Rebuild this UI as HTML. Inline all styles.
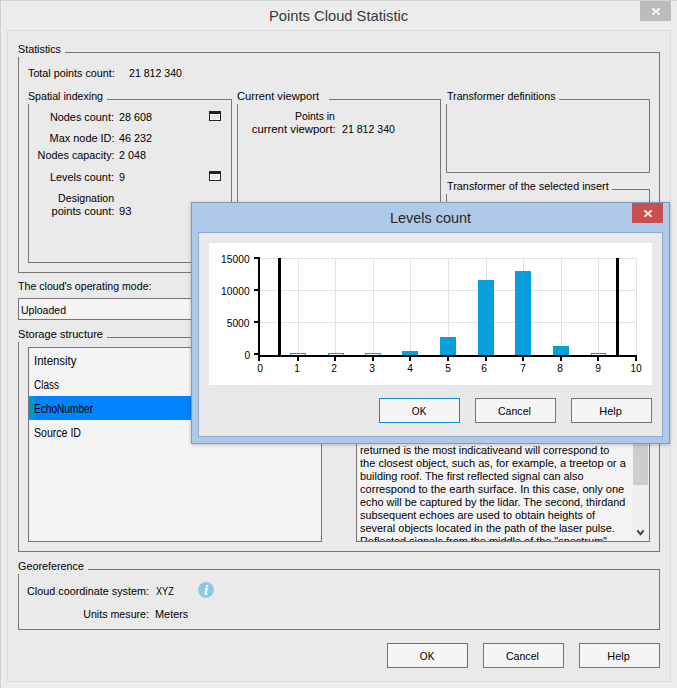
<!DOCTYPE html>
<html><head><meta charset="utf-8"><title>Points Cloud Statistic</title>
<style>
html,body{margin:0;padding:0;background:#ececec;}
body{width:677px;height:688px;position:relative;overflow:hidden;font-family:"Liberation Sans", sans-serif;}
.b{position:absolute;}
.t{position:absolute;white-space:pre;display:block;}
#clip{position:absolute;left:357px;top:431px;width:275px;height:110px;overflow:hidden}
</style></head><body>
<div class="b" style="left:0px;top:0px;width:677px;height:688px;background:#ececec"></div>
<div class="b" style="left:1px;top:1px;width:676px;height:1px;background:#f0f0f0"></div>
<div class="b" style="left:1px;top:1px;width:1px;height:687px;background:#f0f0f0"></div>
<div class="b" style="left:0px;top:0px;width:677px;height:1px;background:#d2d2d2"></div>
<div class="b" style="left:0px;top:0px;width:1px;height:688px;background:#d0d0d0"></div>
<div class="b" style="left:7px;top:30px;width:664px;height:652px;background:#eaeaea;border:1px solid #dcdcdc;box-sizing:border-box"></div>
<div class="b" style="left:640px;top:1px;width:31px;height:20px;background:#bcbcbc"></div>
<svg class="b" style="left:648px;top:3px" width="16" height="16" viewBox="0 0 16 16"><path d="M4.40 5.30 L11.60 11.70 M11.60 5.30 L4.40 11.70" stroke="#fff" stroke-width="1.7" fill="none"/></svg>
<div class="b" style="left:65px;top:52px;width:595px;height:1px;background:#767676"></div>
<div class="b" style="left:18px;top:57px;width:1px;height:216px;background:#767676"></div>
<div class="b" style="left:659px;top:52px;width:1px;height:221px;background:#767676"></div>
<div class="b" style="left:18px;top:272px;width:642px;height:1px;background:#767676"></div>
<div class="b" style="left:107px;top:99px;width:125px;height:1px;background:#767676"></div>
<div class="b" style="left:28px;top:104px;width:1px;height:159px;background:#767676"></div>
<div class="b" style="left:231px;top:99px;width:1px;height:164px;background:#767676"></div>
<div class="b" style="left:28px;top:262px;width:204px;height:1px;background:#767676"></div>
<div class="b" style="left:329px;top:99px;width:112px;height:1px;background:#767676"></div>
<div class="b" style="left:237px;top:104px;width:1px;height:159px;background:#767676"></div>
<div class="b" style="left:440px;top:99px;width:1px;height:164px;background:#767676"></div>
<div class="b" style="left:237px;top:262px;width:204px;height:1px;background:#767676"></div>
<div class="b" style="left:559px;top:99px;width:91px;height:1px;background:#767676"></div>
<div class="b" style="left:446px;top:104px;width:1px;height:69px;background:#767676"></div>
<div class="b" style="left:649px;top:99px;width:1px;height:74px;background:#767676"></div>
<div class="b" style="left:446px;top:172px;width:204px;height:1px;background:#767676"></div>
<div class="b" style="left:612px;top:189px;width:38px;height:1px;background:#767676"></div>
<div class="b" style="left:446px;top:194px;width:1px;height:69px;background:#767676"></div>
<div class="b" style="left:649px;top:189px;width:1px;height:74px;background:#767676"></div>
<div class="b" style="left:446px;top:262px;width:204px;height:1px;background:#767676"></div>
<div class="b" style="left:209px;top:111px;width:12px;height:10px;box-sizing:border-box;border:1px solid #222;border-top:3px solid #222;background:#e8e8e8;box-shadow:inset 0 0 0 1px #fff"></div>
<div class="b" style="left:209px;top:171px;width:12px;height:10px;box-sizing:border-box;border:1px solid #222;border-top:3px solid #222;background:#e8e8e8;box-shadow:inset 0 0 0 1px #fff"></div>
<div class="b" style="left:18px;top:298px;width:313px;height:22px;border:1px solid #767676;background:#f4f4f4;box-sizing:border-box"></div>
<div class="b" style="left:107px;top:337px;width:553px;height:1px;background:#767676"></div>
<div class="b" style="left:18px;top:342px;width:1px;height:210px;background:#767676"></div>
<div class="b" style="left:659px;top:337px;width:1px;height:215px;background:#767676"></div>
<div class="b" style="left:18px;top:551px;width:642px;height:1px;background:#767676"></div>
<div class="b" style="left:28px;top:347px;width:294px;height:195px;border:1px solid #767676;background:#f4f4f4;box-sizing:border-box"></div>
<div class="b" style="left:29px;top:396px;width:292px;height:24px;background:#0084ff"></div>
<div class="b" style="left:29px;top:396px;width:5px;height:24px;background:#0099cc"></div>
<div class="b" style="left:356px;top:430px;width:294px;height:112px;border:1px solid #767676;background:#f4f4f4;box-sizing:border-box"></div>
<div class="b" style="left:633px;top:431px;width:16px;height:110px;background:#f0f0f0"></div>
<div class="b" style="left:633px;top:431px;width:15px;height:54px;background:#cdcdcd"></div>
<svg class="b" style="left:635px;top:527px" width="12" height="12" viewBox="0 0 12 12"><path d="M2.4 3.4 L5.5 7.3 L8.6 3.4" stroke="#3c3c3c" stroke-width="1.9" fill="none"/></svg>
<div class="b" style="left:88px;top:569px;width:572px;height:1px;background:#767676"></div>
<div class="b" style="left:18px;top:574px;width:1px;height:56px;background:#767676"></div>
<div class="b" style="left:659px;top:569px;width:1px;height:61px;background:#767676"></div>
<div class="b" style="left:18px;top:629px;width:642px;height:1px;background:#767676"></div>
<svg class="b" style="left:197px;top:581px" width="18" height="18" viewBox="0 0 18 18"><circle cx="9" cy="8.9" r="7.9" fill="#8ccae4"/><text x="9.1" y="13.8" font-family="Liberation Serif, serif" font-style="italic" font-weight="bold" font-size="15" fill="#fff" text-anchor="middle">i</text></svg>
<div class="b" style="left:387px;top:643px;width:81px;height:25px;border:1px solid #0f8ec4;background:#f5f5f5;box-sizing:border-box"></div>
<div class="b" style="left:483px;top:643px;width:81px;height:25px;border:1px solid #757575;background:#f5f5f5;box-sizing:border-box"></div>
<div class="b" style="left:579px;top:643px;width:81px;height:25px;border:1px solid #757575;background:#f5f5f5;box-sizing:border-box"></div>
<span class="t " style="left:268.80px;top:6.80px;font-size:15px;line-height:17px;color:#383838;transform:scaleX(0.9821);transform-origin:0 0">Points Cloud Statistic</span>
<span class="t " style="left:18.30px;top:42.52px;font-size:11.2px;line-height:13.2px;color:#000;transform:scaleX(0.9606);transform-origin:0 0">Statistics</span>
<span class="t " style="left:28.20px;top:66.52px;font-size:11.2px;line-height:13.2px;color:#000;transform:scaleX(0.9624);transform-origin:0 0">Total points count:</span>
<span class="t " style="left:128.60px;top:66.52px;font-size:11.2px;line-height:13.2px;color:#000;transform:scaleX(0.9464);transform-origin:0 0">21 812 340</span>
<span class="t " style="left:28.40px;top:89.52px;font-size:11.2px;line-height:13.2px;color:#000;transform:scaleX(0.9494);transform-origin:0 0">Spatial indexing</span>
<span class="t " style="left:48.46px;top:110.52px;font-size:11.2px;line-height:13.2px;color:#000;transform:scaleX(0.9706);transform-origin:100% 0">Nodes count:</span>
<span class="t " style="left:119.00px;top:110.52px;font-size:11.2px;line-height:13.2px;color:#000;transform:scaleX(0.9644);transform-origin:0 0">28 608</span>
<span class="t " style="left:47.85px;top:131.52px;font-size:11.2px;line-height:13.2px;color:#000;transform:scaleX(0.9768);transform-origin:100% 0">Max node ID:</span>
<span class="t " style="left:119.00px;top:131.52px;font-size:11.2px;line-height:13.2px;color:#000;transform:scaleX(0.9644);transform-origin:0 0">46 232</span>
<span class="t " style="left:34.79px;top:148.52px;font-size:11.2px;line-height:13.2px;color:#000;transform:scaleX(0.9672);transform-origin:100% 0">Nodes capacity:</span>
<span class="t " style="left:119.00px;top:148.52px;font-size:11.2px;line-height:13.2px;color:#000;transform:scaleX(0.9643);transform-origin:0 0">2 048</span>
<span class="t " style="left:48.46px;top:170.52px;font-size:11.2px;line-height:13.2px;color:#000;transform:scaleX(0.9706);transform-origin:100% 0">Levels count:</span>
<span class="t " style="left:119.00px;top:170.52px;font-size:11.2px;line-height:13.2px;color:#000;transform:scaleX(0.9624);transform-origin:0 0">9</span>
<span class="t " style="left:55.31px;top:191.52px;font-size:11.2px;line-height:13.2px;color:#000;transform:scaleX(0.9476);transform-origin:100% 0">Designation</span>
<span class="t " style="left:50.95px;top:204.52px;font-size:11.2px;line-height:13.2px;color:#000;transform:scaleX(0.9929);transform-origin:100% 0">points count:</span>
<span class="t " style="left:119.00px;top:204.52px;font-size:11.2px;line-height:13.2px;color:#000;transform:scaleX(1.0038);transform-origin:0 0">93</span>
<span class="t " style="left:237.20px;top:89.52px;font-size:11.2px;line-height:13.2px;color:#000;transform:scaleX(0.9990);transform-origin:0 0">Current viewport</span>
<span class="t " style="left:292.48px;top:109.52px;font-size:11.2px;line-height:13.2px;color:#000;transform:scaleX(0.9319);transform-origin:100% 0">Points in</span>
<span class="t " style="left:252.70px;top:122.52px;font-size:11.2px;line-height:13.2px;color:#000;transform:scaleX(1.0157);transform-origin:100% 0">current viewport:</span>
<span class="t " style="left:342.00px;top:122.52px;font-size:11.2px;line-height:13.2px;color:#000;transform:scaleX(0.9464);transform-origin:0 0">21 812 340</span>
<span class="t " style="left:446.60px;top:89.52px;font-size:11.2px;line-height:13.2px;color:#000;transform:scaleX(0.9518);transform-origin:0 0">Transformer definitions</span>
<span class="t " style="left:446.60px;top:179.52px;font-size:11.2px;line-height:13.2px;color:#000;transform:scaleX(0.9691);transform-origin:0 0">Transformer of the selected insert</span>
<span class="t " style="left:18.30px;top:279.52px;font-size:11.2px;line-height:13.2px;color:#000;transform:scaleX(0.9480);transform-origin:0 0">The cloud&#x27;s operating mode:</span>
<span class="t " style="left:21.30px;top:303.55px;font-size:11.4px;line-height:13.4px;color:#000;transform:scaleX(0.9225);transform-origin:0 0">Uploaded</span>
<span class="t " style="left:18.30px;top:327.52px;font-size:11.2px;line-height:13.2px;color:#000;transform:scaleX(0.9904);transform-origin:0 0">Storage structure</span>
<span class="t " style="left:34.30px;top:354.24px;font-size:12px;line-height:14px;color:#000;transform:scaleX(0.9507);transform-origin:0 0">Intensity</span>
<span class="t " style="left:34.30px;top:378.24px;font-size:12px;line-height:14px;color:#000;transform:scaleX(0.8329);transform-origin:0 0">Class</span>
<span class="t " style="left:34.30px;top:402.24px;font-size:12px;line-height:14px;color:#000;transform:scaleX(0.8425);transform-origin:0 0">EchoNumber</span>
<span class="t " style="left:34.30px;top:426.24px;font-size:12px;line-height:14px;color:#000;transform:scaleX(0.8808);transform-origin:0 0">Source ID</span>
<span class="t " style="left:18.30px;top:559.52px;font-size:11.2px;line-height:13.2px;color:#000;transform:scaleX(0.9646);transform-origin:0 0">Georeference</span>
<span class="t " style="left:27.30px;top:584.52px;font-size:11.2px;line-height:13.2px;color:#000;transform:scaleX(0.9665);transform-origin:0 0">Cloud coordinate system:</span>
<span class="t " style="left:156.00px;top:584.52px;font-size:11.2px;line-height:13.2px;color:#000;transform:scaleX(0.8178);transform-origin:0 0">XYZ</span>
<span class="t " style="left:80.28px;top:607.52px;font-size:11.2px;line-height:13.2px;color:#000;transform:scaleX(0.9534);transform-origin:100% 0">Units mesure:</span>
<span class="t " style="left:155.30px;top:607.52px;font-size:11.2px;line-height:13.2px;color:#000;transform:scaleX(0.9736);transform-origin:0 0">Meters</span>
<span class="t " style="left:418.91px;top:649.52px;font-size:11.2px;line-height:13.2px;color:#000;transform:scaleX(0.9028);transform-origin:50% 0">OK</span>
<span class="t " style="left:505.29px;top:649.52px;font-size:11.2px;line-height:13.2px;color:#000;transform:scaleX(0.9475);transform-origin:50% 0">Cancel</span>
<span class="t " style="left:607.49px;top:649.52px;font-size:11.2px;line-height:13.2px;color:#000;transform:scaleX(0.9819);transform-origin:50% 0">Help</span>
<div id="clip"><span class="t d" style="left:3.40px;top:12.87px;font-size:11.5px;line-height:13.5px;color:#000;transform:scaleX(0.9424);transform-origin:0 0">returned is the most indicativeand will correspond to</span>
<span class="t d" style="left:3.40px;top:25.87px;font-size:11.5px;line-height:13.5px;color:#000;transform:scaleX(0.9625);transform-origin:0 0">the closest object, such as, for example, a treetop or a</span>
<span class="t d" style="left:3.40px;top:38.87px;font-size:11.5px;line-height:13.5px;color:#000;transform:scaleX(0.9432);transform-origin:0 0">building roof. The first reflected signal can also</span>
<span class="t d" style="left:3.40px;top:51.87px;font-size:11.5px;line-height:13.5px;color:#000;transform:scaleX(0.9637);transform-origin:0 0">correspond to the earth surface. In this case, only one</span>
<span class="t d" style="left:3.40px;top:64.87px;font-size:11.5px;line-height:13.5px;color:#000;transform:scaleX(0.9439);transform-origin:0 0">echo will be captured by the lidar. The second, thirdand</span>
<span class="t d" style="left:3.40px;top:77.87px;font-size:11.5px;line-height:13.5px;color:#000;transform:scaleX(0.9473);transform-origin:0 0">subsequent echoes are used to obtain heights of</span>
<span class="t d" style="left:3.40px;top:90.87px;font-size:11.5px;line-height:13.5px;color:#000;transform:scaleX(0.9516);transform-origin:0 0">several objects located in the path of the laser pulse.</span>
<span class="t d" style="left:3.40px;top:103.87px;font-size:11.5px;line-height:13.5px;color:#000;transform:scaleX(0.9472);transform-origin:0 0">Reflected signals from the middle of the &quot;spectrum&quot;</span></div>
<div class="b" style="left:191px;top:202px;width:479px;height:242px;background:#aecae8;border:1px solid #7f9abd;box-sizing:border-box;box-shadow:0 1px 4px rgba(0,0,0,0.22)"></div>
<div class="b" style="left:198px;top:232px;width:465px;height:205px;background:#e9e9e9;border:1px solid #8ea9cc;box-sizing:border-box"></div>
<div class="b" style="left:632px;top:203px;width:31px;height:20px;background:#c75050"></div>
<svg class="b" style="left:640px;top:205px" width="16" height="16" viewBox="0 0 16 16"><path d="M4.40 5.30 L11.60 11.70 M11.60 5.30 L4.40 11.70" stroke="#fff" stroke-width="1.7" fill="none"/></svg>
<div class="b" style="left:209px;top:243px;width:443px;height:142px;background:#fff"></div>
<div class="b" style="left:298px;top:258px;width:1px;height:97px;background:#e2e2e2"></div>
<div class="b" style="left:335px;top:258px;width:1px;height:97px;background:#e2e2e2"></div>
<div class="b" style="left:373px;top:258px;width:1px;height:97px;background:#e2e2e2"></div>
<div class="b" style="left:410px;top:258px;width:1px;height:97px;background:#e2e2e2"></div>
<div class="b" style="left:448px;top:258px;width:1px;height:97px;background:#e2e2e2"></div>
<div class="b" style="left:486px;top:258px;width:1px;height:97px;background:#e2e2e2"></div>
<div class="b" style="left:523px;top:258px;width:1px;height:97px;background:#e2e2e2"></div>
<div class="b" style="left:561px;top:258px;width:1px;height:97px;background:#e2e2e2"></div>
<div class="b" style="left:598px;top:258px;width:1px;height:97px;background:#e2e2e2"></div>
<div class="b" style="left:636px;top:258px;width:1px;height:97px;background:#e2e2e2"></div>
<div class="b" style="left:260px;top:258px;width:377px;height:1px;background:#e2e2e2"></div>
<div class="b" style="left:260px;top:290px;width:377px;height:1px;background:#e2e2e2"></div>
<div class="b" style="left:260px;top:322px;width:377px;height:1px;background:#e2e2e2"></div>
<div class="b" style="left:290px;top:353px;width:16px;height:2px;background:#eef8fd;border:1px solid #089fda;border-bottom:0;box-sizing:border-box"></div>
<div class="b" style="left:328px;top:353px;width:16px;height:2px;background:#eef8fd;border:1px solid #089fda;border-bottom:0;box-sizing:border-box"></div>
<div class="b" style="left:365px;top:353px;width:16px;height:2px;background:#eef8fd;border:1px solid #089fda;border-bottom:0;box-sizing:border-box"></div>
<div class="b" style="left:402px;top:351px;width:16px;height:5px;background:#089fda"></div>
<div class="b" style="left:440px;top:337px;width:16px;height:19px;background:#089fda"></div>
<div class="b" style="left:478px;top:280px;width:16px;height:76px;background:#089fda"></div>
<div class="b" style="left:515px;top:271px;width:16px;height:85px;background:#089fda"></div>
<div class="b" style="left:553px;top:346px;width:16px;height:10px;background:#089fda"></div>
<div class="b" style="left:591px;top:353px;width:15px;height:2px;background:#eef8fd;border:1px solid #089fda;border-bottom:0;box-sizing:border-box"></div>
<div class="b" style="left:258px;top:257px;width:2px;height:100px;background:#000"></div>
<div class="b" style="left:258px;top:355px;width:379px;height:2px;background:#000"></div>
<div class="b" style="left:254px;top:257px;width:6px;height:2px;background:#000"></div>
<div class="b" style="left:254px;top:289px;width:6px;height:2px;background:#000"></div>
<div class="b" style="left:254px;top:321px;width:6px;height:2px;background:#000"></div>
<div class="b" style="left:254px;top:353px;width:6px;height:2px;background:#000"></div>
<div class="b" style="left:258px;top:355px;width:2px;height:6px;background:#000"></div>
<div class="b" style="left:297px;top:355px;width:2px;height:6px;background:#000"></div>
<div class="b" style="left:334px;top:355px;width:2px;height:6px;background:#000"></div>
<div class="b" style="left:372px;top:355px;width:2px;height:6px;background:#000"></div>
<div class="b" style="left:409px;top:355px;width:2px;height:6px;background:#000"></div>
<div class="b" style="left:447px;top:355px;width:2px;height:6px;background:#000"></div>
<div class="b" style="left:485px;top:355px;width:2px;height:6px;background:#000"></div>
<div class="b" style="left:522px;top:355px;width:2px;height:6px;background:#000"></div>
<div class="b" style="left:560px;top:355px;width:2px;height:6px;background:#000"></div>
<div class="b" style="left:597px;top:355px;width:2px;height:6px;background:#000"></div>
<div class="b" style="left:635px;top:355px;width:2px;height:6px;background:#000"></div>
<div class="b" style="left:278px;top:258px;width:3px;height:99px;background:#000"></div>
<div class="b" style="left:616px;top:258px;width:3px;height:99px;background:#000"></div>
<div class="b" style="left:379px;top:398px;width:81px;height:25px;border:1px solid #0f8ec4;background:#f5f5f5;box-sizing:border-box"></div>
<div class="b" style="left:475px;top:398px;width:81px;height:25px;border:1px solid #757575;background:#f5f5f5;box-sizing:border-box"></div>
<div class="b" style="left:571px;top:398px;width:81px;height:25px;border:1px solid #757575;background:#f5f5f5;box-sizing:border-box"></div>
<span class="t " style="left:390.00px;top:209.20px;font-size:15px;line-height:17px;color:#262626;transform:scaleX(0.9616);transform-origin:0 0">Levels count</span>
<span class="t " style="left:410.91px;top:404.52px;font-size:11.2px;line-height:13.2px;color:#000;transform:scaleX(0.9028);transform-origin:50% 0">OK</span>
<span class="t " style="left:497.29px;top:404.52px;font-size:11.2px;line-height:13.2px;color:#000;transform:scaleX(0.9475);transform-origin:50% 0">Cancel</span>
<span class="t " style="left:599.49px;top:404.52px;font-size:11.2px;line-height:13.2px;color:#000;transform:scaleX(0.9819);transform-origin:50% 0">Help</span>
<span class="t " style="left:219.31px;top:253.49px;font-size:11px;line-height:13px;color:#000;transform:scaleX(0.9316);transform-origin:100% 0">15000</span>
<span class="t " style="left:219.31px;top:285.29px;font-size:11px;line-height:13px;color:#000;transform:scaleX(0.9316);transform-origin:100% 0">10000</span>
<span class="t " style="left:225.42px;top:316.79px;font-size:11px;line-height:13px;color:#000;transform:scaleX(0.9312);transform-origin:100% 0">5000</span>
<span class="t " style="left:243.78px;top:348.59px;font-size:11px;line-height:13px;color:#000;transform:scaleX(0.9306);transform-origin:100% 0">0</span>
<span class="t " style="left:256.84px;top:361.69px;font-size:11px;line-height:13px;color:#000;transform:scaleX(0.9306);transform-origin:50% 0">0</span>
<span class="t " style="left:294.19px;top:361.69px;font-size:11px;line-height:13px;color:#000;transform:scaleX(0.9306);transform-origin:50% 0">1</span>
<span class="t " style="left:331.44px;top:361.69px;font-size:11px;line-height:13px;color:#000;transform:scaleX(0.9306);transform-origin:50% 0">2</span>
<span class="t " style="left:368.69px;top:361.69px;font-size:11px;line-height:13px;color:#000;transform:scaleX(0.9306);transform-origin:50% 0">3</span>
<span class="t " style="left:407.44px;top:361.69px;font-size:11px;line-height:13px;color:#000;transform:scaleX(0.9306);transform-origin:50% 0">4</span>
<span class="t " style="left:444.74px;top:361.69px;font-size:11px;line-height:13px;color:#000;transform:scaleX(0.9306);transform-origin:50% 0">5</span>
<span class="t " style="left:481.44px;top:361.69px;font-size:11px;line-height:13px;color:#000;transform:scaleX(0.9306);transform-origin:50% 0">6</span>
<span class="t " style="left:519.69px;top:361.69px;font-size:11px;line-height:13px;color:#000;transform:scaleX(0.9306);transform-origin:50% 0">7</span>
<span class="t " style="left:556.64px;top:361.69px;font-size:11px;line-height:13px;color:#000;transform:scaleX(0.9306);transform-origin:50% 0">8</span>
<span class="t " style="left:594.69px;top:361.69px;font-size:11px;line-height:13px;color:#000;transform:scaleX(0.9306);transform-origin:50% 0">9</span>
<span class="t " style="left:629.77px;top:361.69px;font-size:11px;line-height:13px;color:#000;transform:scaleX(0.9306);transform-origin:50% 0">10</span>
</body></html>
